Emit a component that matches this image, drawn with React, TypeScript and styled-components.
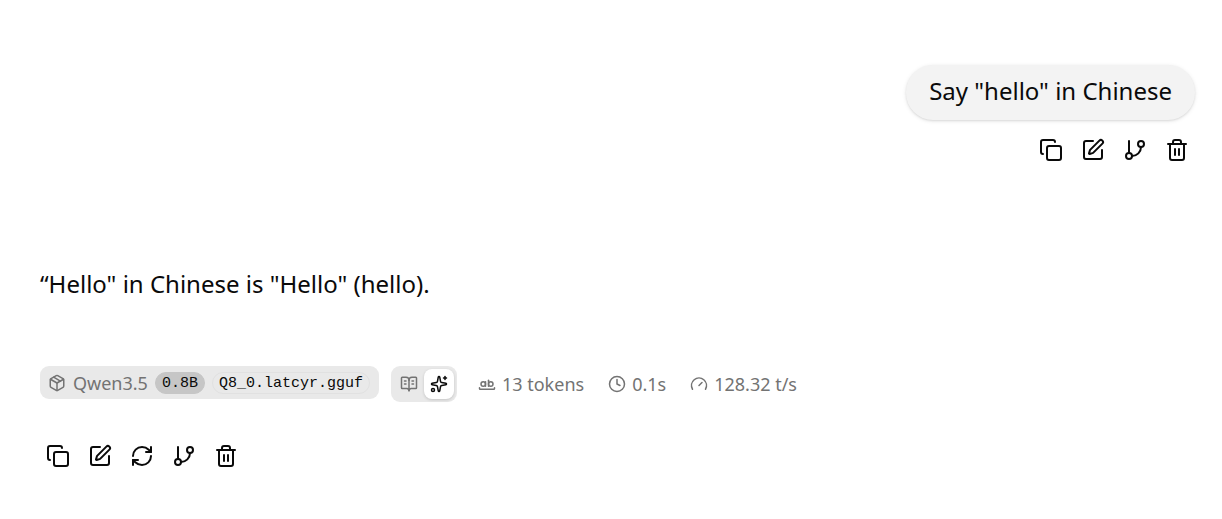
import React from "react";
import styled, { createGlobalStyle } from "styled-components";
import {
  BookOpenText,
  Clock,
  Copy,
  Gauge,
  GitBranch,
  Package,
  RefreshCw,
  Sparkles,
  SquarePen,
  Trash2,
  WholeWord,
} from "lucide-react";

const GlobalStyle = createGlobalStyle`
  *, *::before, *::after { box-sizing: border-box; }
  body {
    margin: 0;
    background: #ffffff;
    color: #0a0a0a;
    font-family: "Noto Sans", sans-serif;
  }
`;

const Conversation = styled.main`
  display: flex;
  flex-direction: column;
  gap: 98px;
  padding: 65px 27px 45px 40px;
`;

const Message = styled.article<{ $align: "start" | "end" }>`
  display: flex;
  flex-direction: column;
  align-items: flex-${(p) => p.$align};
`;

const Bubble = styled.div`
  padding: 8px 23px 12px;
  border-radius: 27px;
  background: #f3f3f3;
  box-shadow: 0 1px 4px rgba(0, 0, 0, 0.1), 0 1px 2px rgba(0, 0, 0, 0.08);
  font-size: 24px;
  line-height: 35px;
`;

const Reply = styled.p`
  margin: 0;
  font-size: 24px;
  line-height: 36px;
`;

const Actions = styled.div<{ $top: number }>`
  display: flex;
  gap: 6px;
  margin-top: ${(p) => p.$top}px;
`;

const IconButton = styled.button`
  display: flex;
  align-items: center;
  justify-content: center;
  width: 36px;
  height: 36px;
  padding: 0;
  border: 0;
  border-radius: 9px;
  background: transparent;
  color: #0a0a0a;
  cursor: pointer;
`;

const InfoRow = styled.div`
  display: flex;
  flex-wrap: wrap;
  align-items: flex-start;
  gap: 12px;
  margin-top: 64px;
  color: #737373;
  font-size: 18px;
`;

const ModelButton = styled.button`
  display: flex;
  align-items: center;
  gap: 7px;
  height: 33px;
  padding: 0 9px 0 8px;
  border: 0;
  border-radius: 9px;
  background: #e9e9e9;
  color: #737373;
  font: inherit;
  cursor: pointer;
`;

const Tag = styled.span<{ $filled?: boolean }>`
  padding: 1px 6px 0;
  border: 1px solid ${(p) => (p.$filled ? "#c6c6c6" : "#e1e1e1")};
  border-radius: 11px;
  background: ${(p) => (p.$filled ? "#c6c6c6" : "transparent")};
  color: #0a0a0a;
  font-family: "Liberation Mono", monospace;
  font-size: 15px;
  line-height: 19px;
`;

const ViewSwitch = styled.div`
  display: flex;
  height: 36px;
  padding: 3px;
  border-radius: 9px;
  background: #e9e9e9;
`;

const ViewButton = styled.button<{ $active?: boolean }>`
  display: flex;
  align-items: center;
  justify-content: center;
  width: 30px;
  height: 30px;
  padding: 0;
  border: 0;
  border-radius: 8px;
  background: ${(p) => (p.$active ? "#ffffff" : "transparent")};
  box-shadow: ${(p) => (p.$active ? "0 1px 3px rgba(0, 0, 0, 0.16)" : "none")};
  color: ${(p) => (p.$active ? "#0a0a0a" : "#737373")};
  cursor: pointer;
`;

const Stats = styled.div`
  display: flex;
  gap: 24px;
  margin-left: 9px;
`;

const Stat = styled.span`
  display: flex;
  align-items: center;
  gap: 6px;
  height: 36px;
  white-space: nowrap;
`;

function MessageActions({ top, canRetry }: { top: number; canRetry?: boolean }) {
  return (
    <Actions $top={top}>
      <IconButton aria-label="Copy"><Copy size={24} /></IconButton>
      <IconButton aria-label="Edit"><SquarePen size={24} /></IconButton>
      {canRetry && (
        <IconButton aria-label="Regenerate"><RefreshCw size={24} /></IconButton>
      )}
      <IconButton aria-label="Branch"><GitBranch size={24} /></IconButton>
      <IconButton aria-label="Delete"><Trash2 size={24} /></IconButton>
    </Actions>
  );
}

export default function App() {
  return (
    <>
      <GlobalStyle />
      <Conversation>
        <Message $align="end">
          <Bubble>Say "hello" in Chinese</Bubble>
          <MessageActions top={12} />
        </Message>
        <Message $align="start">
          <Reply>“Hello" in Chinese is "Hello" (hello).</Reply>
          <InfoRow>
            <ModelButton>
              <Package size={18} />
              <span>Qwen3.5</span>
              <Tag $filled>0.8B</Tag>
              <Tag>Q8_0.latcyr.gguf</Tag>
            </ModelButton>
            <ViewSwitch>
              <ViewButton aria-label="Reading statistics"><BookOpenText size={18} /></ViewButton>
              <ViewButton $active aria-label="Generation statistics"><Sparkles size={18} /></ViewButton>
            </ViewSwitch>
            <Stats>
              <Stat><WholeWord size={18} />13 tokens</Stat>
              <Stat><Clock size={18} />0.1s</Stat>
              <Stat><Gauge size={18} />128.32 t/s</Stat>
            </Stats>
          </InfoRow>
          <MessageActions top={36} canRetry />
        </Message>
      </Conversation>
    </>
  );
}
